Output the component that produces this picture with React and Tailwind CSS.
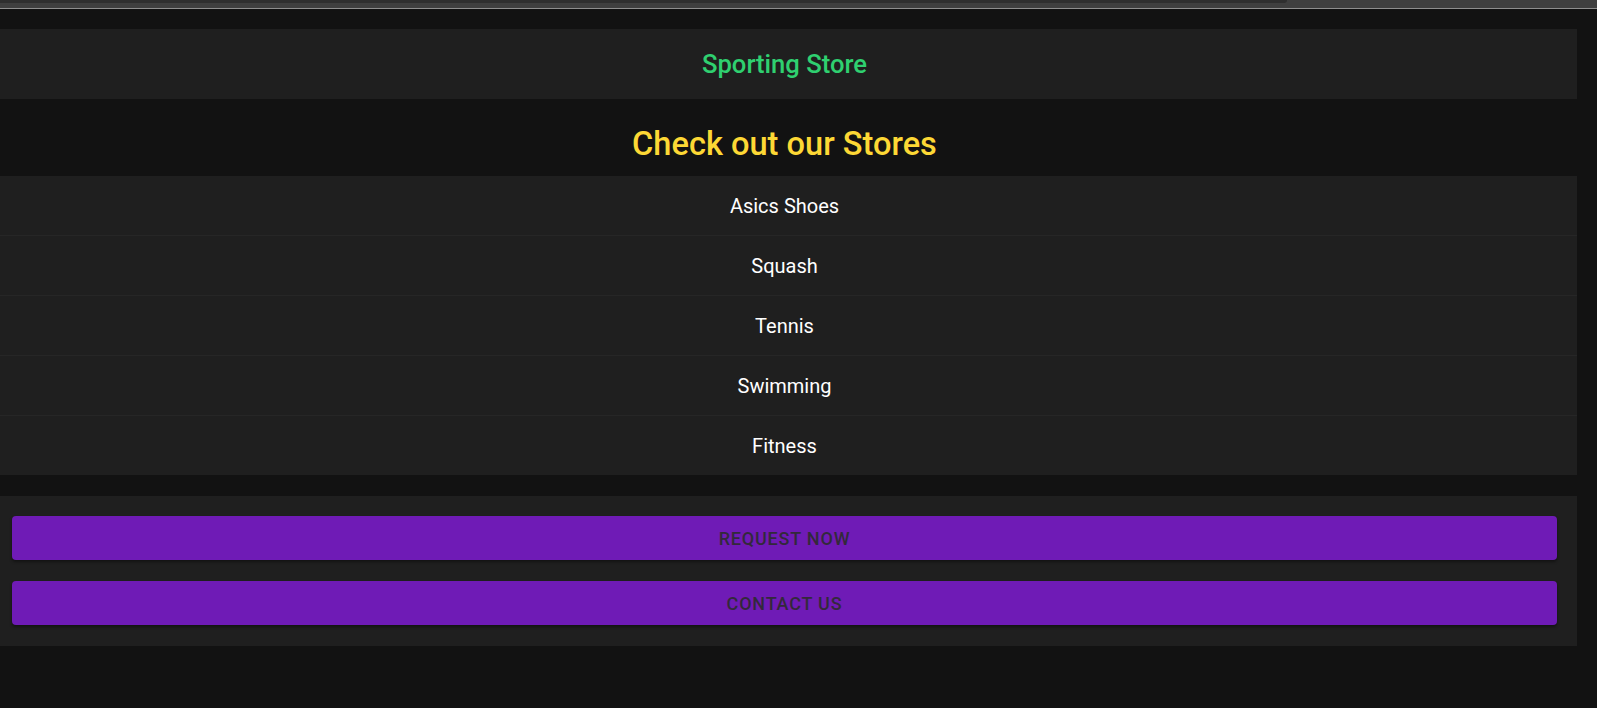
import React from "react";

const stores = ["Asics Shoes", "Squash", "Tennis", "Swimming", "Fitness"];

const App = () => {
    return (
        <div className="min-h-[708px] bg-[#121212] font-['Roboto',sans-serif]">
            {/* thin strip along the top edge */}
            <div className="h-[8px] bg-[#3f3f3f]">
                <div className="h-[3px] w-[1287px] bg-[#2f2f2f] rounded-br-[8px]"></div>
            </div>
            <div className="h-px bg-[#8e8e8e]"></div>

            <div className="pr-[20px] pt-[20px]">
                <div className="-ml-2">
                    <header className="h-[70px] pt-[2px] bg-[#1f1f1f] flex items-center justify-center">
                        <h1 className="text-[25.6px] font-medium text-[#2fd070] leading-none">Sporting Store</h1>
                    </header>

                    <h2 className="pt-[21px] pb-[8px] text-center text-[32.6px] leading-[48px] font-medium text-[#fdd835]">
                        Check out our Stores
                    </h2>

                    <ul className="bg-[#1f1f1f]">
                        {stores.map((store, idx) => (
                            <li
                                key={store}
                                className={`flex items-center justify-center text-[20px] text-white ${
                                    idx < stores.length - 1 ? "h-[60px] border-b border-[#262626]" : "h-[59px]"
                                }`}
                            >
                                {store}
                            </li>
                        ))}
                    </ul>

                    <div className="mt-[21px] bg-[#1f1f1f] px-[20px] pt-[20px] pb-[21px] flex flex-col gap-[21px]">
                        <button className="h-[44px] w-full rounded-[4px] bg-[#6f1bb6] text-[#33293b] text-[18px] font-medium uppercase tracking-[0.8px] shadow-[0_2px_3px_rgba(0,0,0,0.4)]">
                            Request Now
                        </button>
                        <button className="h-[44px] w-full rounded-[4px] bg-[#6f1bb6] text-[#33293b] text-[18px] font-medium uppercase tracking-[0.8px] shadow-[0_2px_3px_rgba(0,0,0,0.4)]">
                            Contact Us
                        </button>
                    </div>
                </div>
            </div>
        </div>
    );
};

export default App;
